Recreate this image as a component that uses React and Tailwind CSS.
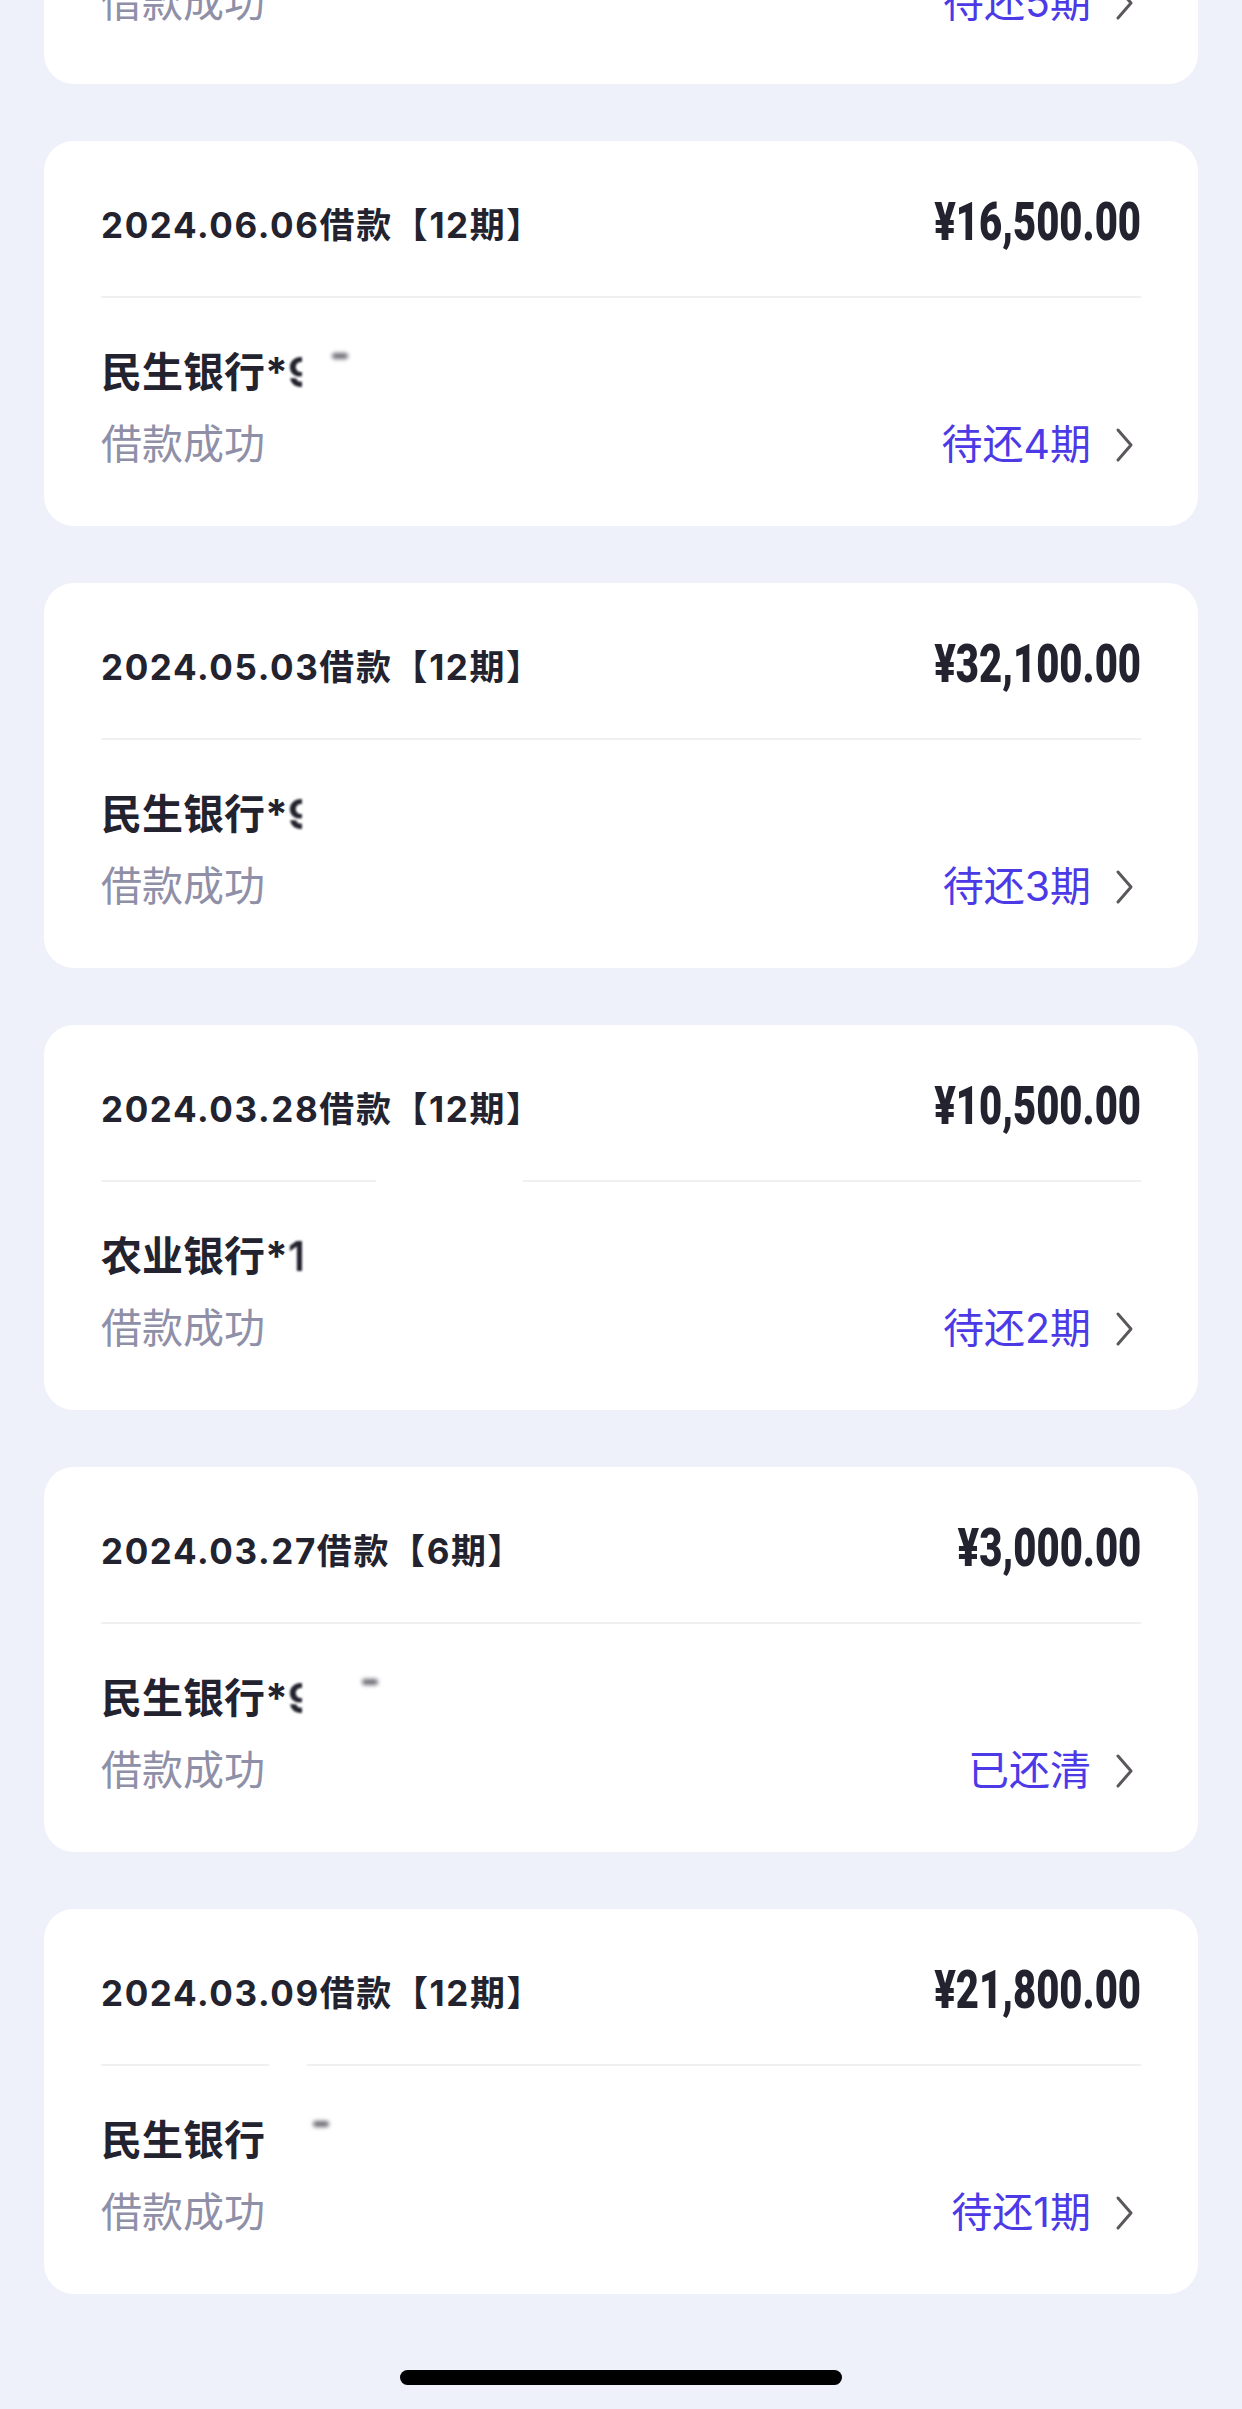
import React from "react";

const loans = [
  { date: "2024.07.05", periods: 12, amount: "¥18,000.00", bank: "民生银行*", tail: "9", status: "待还5期" },
  { date: "2024.06.06", periods: 12, amount: "¥16,500.00", bank: "民生银行*", tail: "9", status: "待还4期", smudge: 30 },
  { date: "2024.05.03", periods: 12, amount: "¥32,100.00", bank: "民生银行*", tail: "9", status: "待还3期" },
  { date: "2024.03.28", periods: 12, amount: "¥10,500.00", bank: "农业银行*", tail: "1", status: "待还2期", gap: [275, 147] },
  { date: "2024.03.27", periods: 6, amount: "¥3,000.00", bank: "民生银行*", tail: "9", status: "已还清", smudge: 60 },
  { date: "2024.03.09", periods: 12, amount: "¥21,800.00", bank: "民生银行", tail: "", status: "待还1期", smudge: 48, gap: [168, 38] },
];

const Chevron = () => (
  <svg width="22" height="36" viewBox="0 0 22 36" className="ml-[23px] mr-[5px]">
    <polyline points="4,3 17,18 4,33" fill="none" stroke="#5b575c" strokeWidth="3" strokeLinecap="round" strokeLinejoin="round" />
  </svg>
);

const Divider = ({ gap }) => {
  if (!gap) return <div className="h-[2px] bg-[#f0f0f3]" />;
  return (
    <div className="flex h-[2px]">
      <div className="bg-[#f0f0f3]" style={{ width: gap[0] }} />
      <div style={{ width: gap[1] }} />
      <div className="flex-1 bg-[#f0f0f3]" />
    </div>
  );
};

const LoanCard = ({ loan }) => (
  <div className="bg-white rounded-[30px] h-[385px] px-[57px] pt-[60px]">
    <div className="flex items-center justify-between h-[48px]">
      <span className="text-[35px] font-bold text-[#23232f] tracking-[1.6px]">
        {loan.date}借款【{loan.periods}期】
      </span>
      <span className="inline-block origin-right scale-x-[0.755] font-['Roboto',sans-serif] font-black text-[53px] leading-none text-[#22232f] mb-[6px]">
        {loan.amount}
      </span>
    </div>
    <div className="mt-[47px]">
      <Divider gap={loan.gap} />
    </div>
    <div className="mt-[49px] h-[52px] flex items-center text-[41px] font-bold text-[#23232f]">
      <span>{loan.bank}</span>
      {loan.tail && (
        <span className="inline-block w-[14px] overflow-hidden blur-[1px]">{loan.tail}</span>
      )}
      {loan.smudge && (
        <span
          className="inline-block w-[16px] h-[6px] rounded-full bg-[#6b6b75] blur-[2px] self-start mt-[6px]"
          style={{ marginLeft: loan.smudge }}
        />
      )}
    </div>
    <div className="mt-[20px] h-[52px] flex items-center justify-between text-[41px]">
      <span className="text-[#8f8fa7]">借款成功</span>
      <span className="flex items-center text-[#4b3ae6]">
        {loan.status}
        <Chevron />
      </span>
    </div>
  </div>
);

export default function App() {
  return (
    <div className="w-[1242px] h-[2409px] overflow-hidden bg-[#eef1f9] font-['Inter','Noto_Sans_CJK_SC',sans-serif]">
      <div className="flex flex-col gap-[57px] px-[44px] mt-[-301px]">
        {loans.map((loan, i) => (
          <LoanCard key={i} loan={loan} />
        ))}
      </div>
      <div className="flex justify-center mt-[76px]">
        <div className="w-[442px] h-[15px] rounded-full bg-black" />
      </div>
    </div>
  );
}
